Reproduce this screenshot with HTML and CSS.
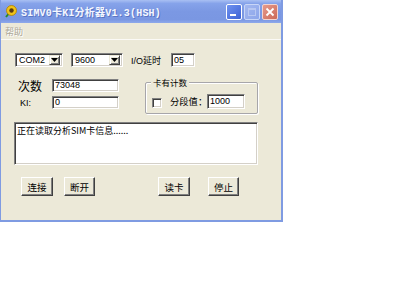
FILE: index.html
```html
<!DOCTYPE html>
<html>
<head>
<meta charset="utf-8">
<link rel="stylesheet" href="styles.css">
</head>
<body>
<div class="window">
  <div class="titlebar">
    <svg class="appicon" width="13" height="13" viewBox="0 0 13 13">
      <line x1="2" y1="12" x2="6" y2="7" stroke="#2a8a2a" stroke-width="2"/>
      <circle cx="7.5" cy="5.5" r="5" fill="#f0c419" stroke="#b08000" stroke-width="0.8"/>
      <circle cx="7.5" cy="5.5" r="2.2" fill="#5a3a10"/>
    </svg>
    <span class="title">SIMV0卡KI分析器V1.3(HSH)</span>
    <div class="tbtns">
      <span class="tb min"><span class="minbar"></span></span>
      <span class="tb max"><span class="maxbox"></span></span>
      <span class="tb close">
        <svg width="10" height="10" viewBox="0 0 10 10"><path d="M1.5 1.5 L8.5 8.5 M8.5 1.5 L1.5 8.5" stroke="#fff" stroke-width="1.8"/></svg>
      </span>
    </div>
  </div>
  <div class="menubar"><span class="menu">帮助</span></div>
  <div class="client">
    <div class="row1">
      <div class="combo c1"><span class="val">COM2</span><span class="drop"><svg width="7" height="4" viewBox="0 0 7 4"><path d="M0 0H7L3.5 4Z" fill="#000"/></svg></span></div>
      <div class="combo c2"><span class="val">9600</span><span class="drop"><svg width="7" height="4" viewBox="0 0 7 4"><path d="M0 0H7L3.5 4Z" fill="#000"/></svg></span></div>
      <span class="iolabel">I/O延时</span>
      <div class="field io"><span class="val">05</span></div>
    </div>
    <div class="mid">
      <div class="leftcol">
        <div class="frow"><span class="lbl big">次数</span><div class="field wide"><span class="val">73048</span></div></div>
        <div class="frow"><span class="lbl ki">KI:</span><div class="field wide"><span class="val">0</span></div></div>
      </div>
      <div class="group">
        <span class="legend">卡有计数</span>
        <span class="check"></span>
        <span class="seglabel">分段值：</span>
        <div class="field seg"><span class="val">1000</span></div>
      </div>
    </div>
    <div class="textarea">正在读取分析SIM卡信息......</div>
    <div class="buttons">
      <span class="btn b1">连接</span>
      <span class="btn b2">断开</span>
      <span class="btn b3">读卡</span>
      <span class="btn b4">停止</span>
    </div>
  </div>
</div>
</body>
</html>
```
FILE: styles.css
```css
* { box-sizing: border-box; }
html, body { margin: 0; padding: 0; background: #fff; }
body { width: 400px; height: 300px; overflow: hidden; font-family: "Liberation Sans", "Noto Sans CJK SC", sans-serif; }

.window {
  width: 283px;
  height: 222px;
  background: #ece9d8;
  border-left: 1px solid #7f9be2;
  border-right: 2px solid #7f9be2;
  border-bottom: 2px solid #7f9be2;
  display: flex;
  flex-direction: column;
}

.titlebar {
  height: 23px;
  flex: none;
  display: flex;
  align-items: center;
  padding: 0 3px 0 3px;
  background: linear-gradient(to bottom, #a9c0f3 0%, #86a3ea 15%, #7b98e3 50%, #7a97e2 85%, #8ea9eb 100%);
}
.appicon { flex: none; margin-right: 4px; }
.title {
  font-family: "Liberation Mono", "Noto Sans CJK SC", monospace;
  font-weight: bold;
  font-size: 10px;
  letter-spacing: 0.2px;
  color: #f4f7ff;
  text-shadow: 1px 1px 0 #5a75c4;
  white-space: nowrap;
}
.tbtns { margin-left: auto; display: flex; gap: 2px; }
.tb {
  width: 16px; height: 16px;
  border: 1px solid #fff;
  border-radius: 2px;
  display: flex; align-items: center; justify-content: center;
}
.tb.min { background: linear-gradient(135deg, #6f92f0, #3d62d4); }
.minbar { width: 6px; height: 2px; background: #fff; margin-top: 7px; margin-right: 2px; }
.tb.max { background: linear-gradient(135deg, #a3b8f0, #8ca5ea); border-color: #c8d6f7; }
.maxbox { width: 8px; height: 8px; border: 1px solid #b7c7f2; border-top-width: 2px; }
.tb.close { background: linear-gradient(135deg, #e69a8c, #cc6a58); border-color: #f3d4cf; }

.menubar {
  height: 17px;
  flex: none;
  border-bottom: 1px solid #fbfaf6;
  display: flex;
  align-items: center;
  padding-left: 4px;
}
.menu {
  font-family: "Noto Sans CJK SC", sans-serif;
  font-size: 9px;
  color: #aca899;
  text-shadow: 1px 1px 0 #fff;
}

.client { flex: 1; }

.val {
  font-family: "Liberation Sans", "Noto Sans CJK SC", sans-serif;
  font-size: 9px;
  color: #000;
  line-height: 1;
  padding-left: 2px;
}

.field, .combo {
  background: #fff;
  border: 1px solid;
  border-color: #808080 #fff #fff #808080;
  box-shadow: inset 1px 1px 0 #404040, inset -1px -1px 0 #d4d0c8;
  display: flex;
  align-items: center;
}

.row1 {
  display: flex;
  align-items: center;
  margin: 13px 0 0 14px;
  height: 14px;
}
.combo { height: 14px; justify-content: space-between; padding: 1px; }
.c1 { width: 48px; }
.c2 { width: 52px; margin-left: 8px; }
.drop {
  width: 11px; height: 10px;
  background: #ece9d8;
  border: 1px solid;
  border-color: #ece9d8 #404040 #404040 #ece9d8;
  box-shadow: inset 1px 1px 0 #fff, inset -1px -1px 0 #808080;
  display: flex; align-items: center; justify-content: center;
  margin-right: 1px;
}
.iolabel {
  margin-left: 8px;
  width: 32px;
  font-family: "Liberation Sans", "Noto Sans CJK SC", sans-serif;
  font-size: 9px;
  white-space: nowrap;
}
.field.io { width: 24px; height: 14px; margin-left: 8px; }

.mid {
  display: flex;
  margin: 12px 0 0 14px;
}
.leftcol { display: flex; flex-direction: column; gap: 4px; }
.frow { display: flex; align-items: center; height: 13px; }
.lbl { width: 34px; margin-left: 3px; white-space: nowrap; }
.lbl.big { font-family: "Noto Sans CJK SC", sans-serif; font-size: 12px; }
.lbl.ki { font-size: 9px; padding-left: 2px; }
.field.wide { width: 67px; height: 13px; }

.group {
  position: relative;
  margin: 3px 0 0 26px;
  width: 113px;
  height: 32px;
  border: 1px solid #a7a6aa;
  box-shadow: 1px 1px 0 #fff, inset 1px 1px 0 #fff;
  border-radius: 2px;
  display: flex;
  align-items: center;
  padding: 6px 0 0 6px;
}
.legend {
  position: absolute;
  left: 5px; top: -7px;
  padding: 0 2px;
  background: #ece9d8;
  font-family: "Noto Sans CJK SC", sans-serif;
  font-size: 8.5px;
  line-height: 12px;
}
.check {
  width: 10px; height: 10px;
  background: #fff;
  border: 1px solid;
  border-color: #808080 #fff #fff #808080;
  box-shadow: inset 1px 1px 0 #404040, inset -1px -1px 0 #d4d0c8;
  margin-top: 4px;
}
.seglabel {
  margin-left: 8px;
  width: 37px;
  font-family: "Noto Sans CJK SC", sans-serif;
  font-size: 9.3px;
  white-space: nowrap;
}
.field.seg { width: 38px; height: 15px; }

.textarea {
  margin: 8px 0 0 13px;
  width: 244px;
  height: 43px;
  background: #fff;
  border: 1px solid;
  border-color: #808080 #fff #fff #808080;
  box-shadow: inset 1px 1px 0 #404040, inset -1px -1px 0 #d4d0c8;
  font-family: "Noto Sans CJK SC", "Liberation Sans", sans-serif;
  font-size: 9px;
  line-height: 12px;
  padding: 2px 0 0 2px;
  white-space: nowrap;
}

.buttons {
  display: flex;
  margin: 12px 0 0 20px;
}
.btn {
  height: 19px;
  background: #ece9d8;
  border: 1px solid;
  border-color: #fff #404040 #404040 #fff;
  box-shadow: inset -1px -1px 0 #808080;
  display: flex; align-items: center; justify-content: center;
  font-family: "Noto Sans CJK SC", sans-serif;
  font-size: 9.5px;
  color: #000;
}
.b1 { width: 32px; }
.b2 { width: 31px; margin-left: 11px; }
.b3 { width: 32px; margin-left: 63px; }
.b4 { width: 31px; margin-left: 18px; }
```
